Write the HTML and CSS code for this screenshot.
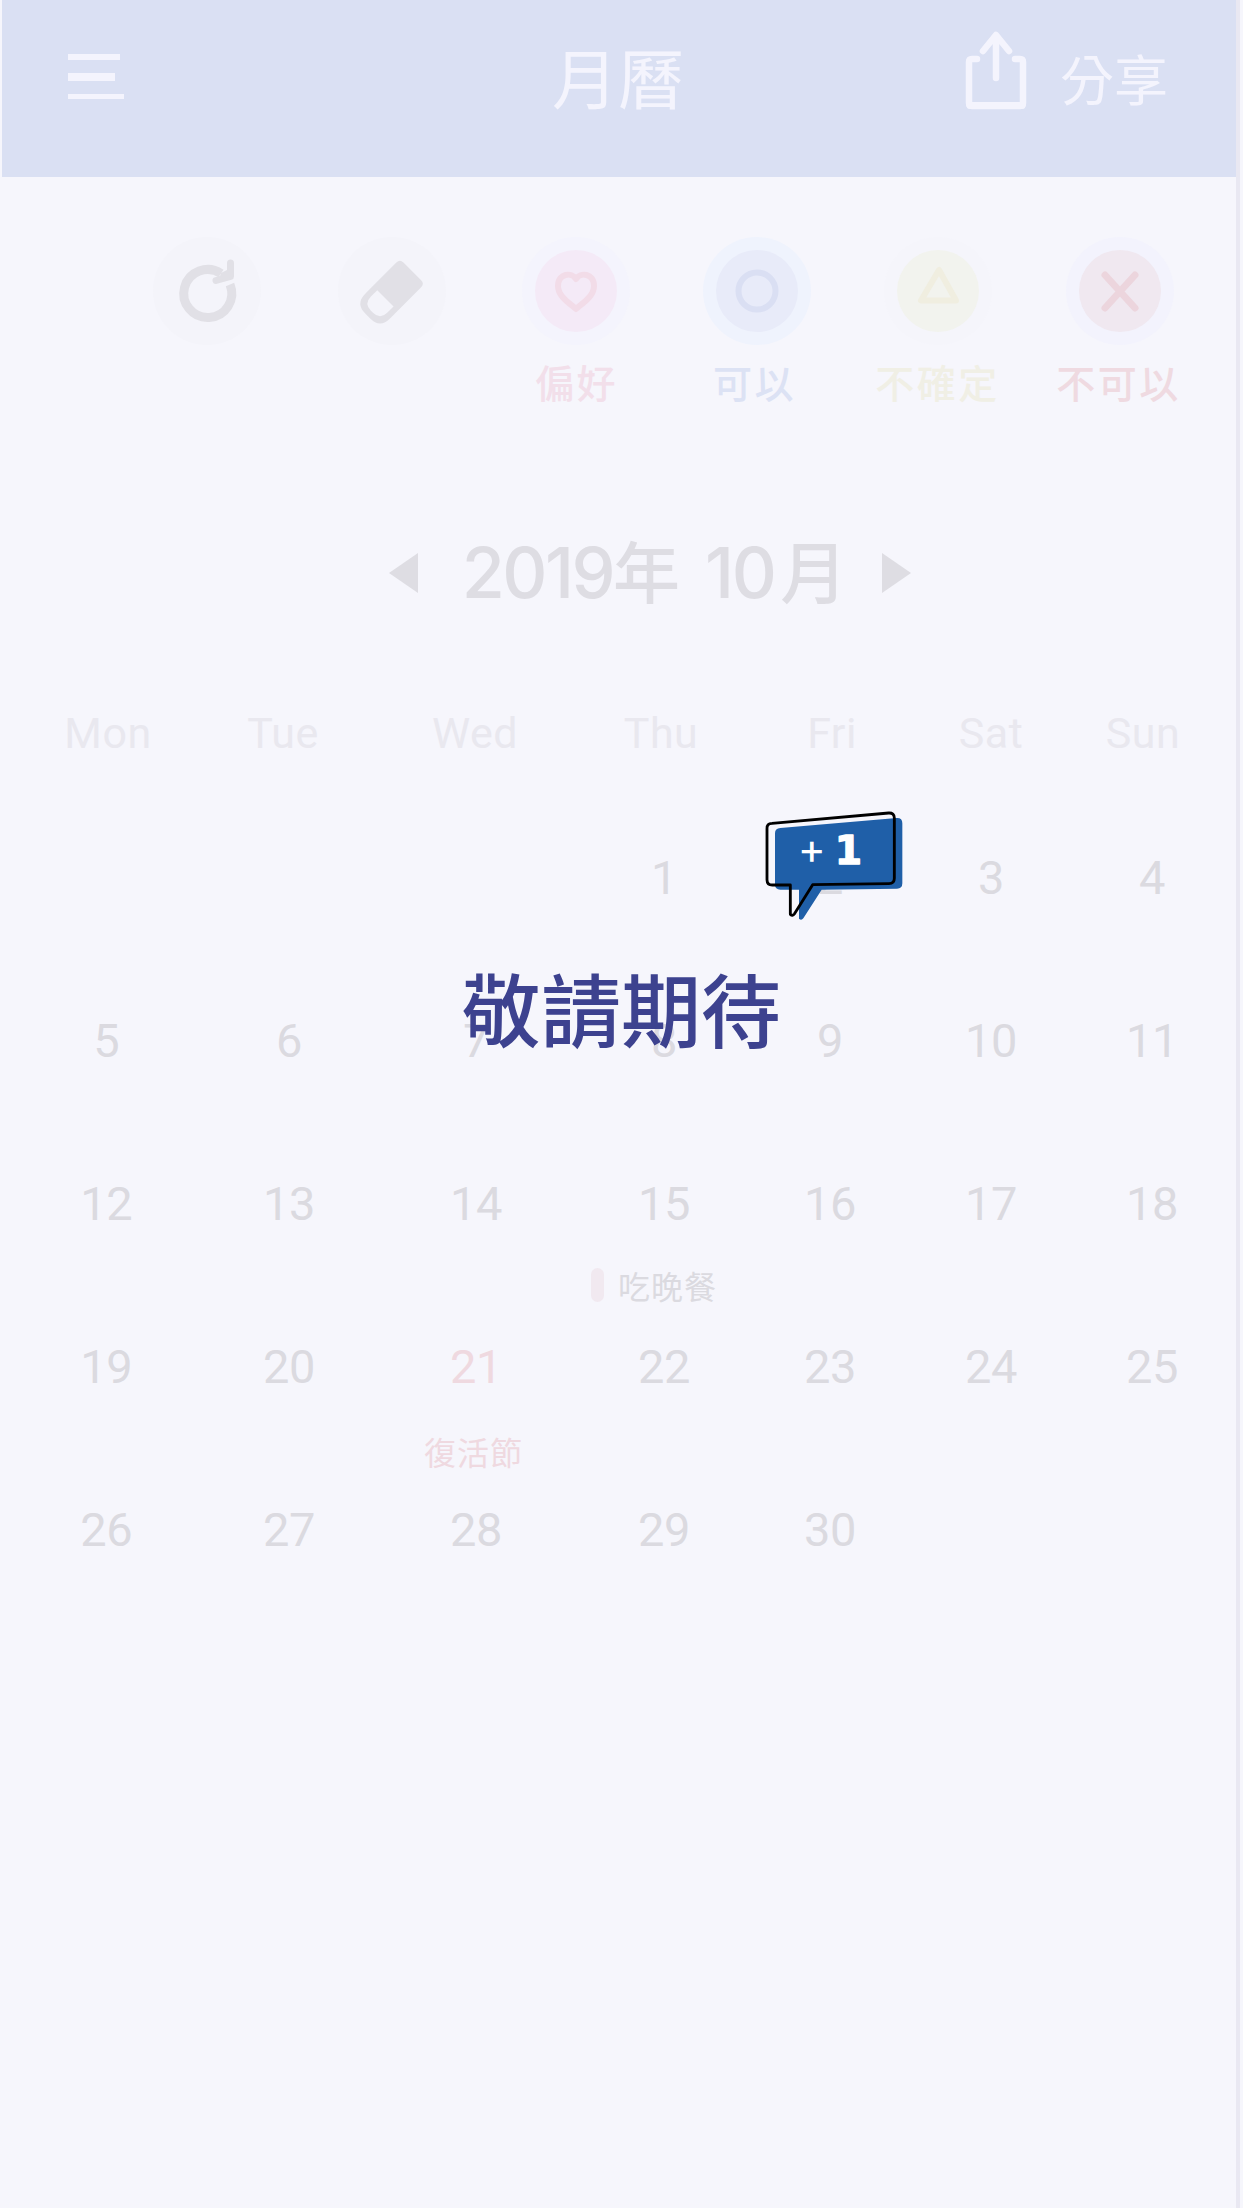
FILE: index.html
```html
<!DOCTYPE html>
<html lang="zh-Hant">
<head>
<meta charset="utf-8">
<title>月曆</title>
<link rel="stylesheet" href="styles.css">
</head>
<body>
<div class="app">
  <header class="topbar">
    <div class="menu"><i class="bar bar-a"></i><i class="bar bar-b"></i><i class="bar bar-c"></i></div>
    <h1 class="title">月曆</h1>
    <div class="share">
      <svg class="share-icon" width="66" height="84" viewBox="0 0 66 84" fill="none" stroke="currentColor" stroke-linecap="round" stroke-linejoin="round">
        <path d="M14 32H9Q6 32 6 35V76Q6 79 9 79H57Q60 79 60 76V35Q60 32 57 32H52" stroke-width="6.500"/>
        <path d="M7 78.500H59" stroke-width="7"/>
        <path d="M33 51V9M20 24L33 8L46 24" stroke-width="6.500"/>
      </svg>
      <span class="share-text">分享</span>
    </div>
  </header>

  <nav class="tools">
    <div class="tool"><svg class="disc gray" width="110" height="110" viewBox="-55 -55 110 110">
      <circle class="halo" r="54"/>
      <path d="M23 -6.500A24 24 0 1 1 14 -17.500" class="ring" stroke-width="9"/>
      <path d="M23.500 -28V-14.500L9 -10.500" class="line" stroke-width="7"/>
      <path d="M14 -18L22 -22L25 -14L12 -11Z" class="solid"/>
    </svg></div>
    <div class="tool"><svg class="disc gray" width="110" height="110" viewBox="-55 -55 110 110">
      <circle class="halo" r="54"/>
      <g transform="translate(-2 2) rotate(-45)">
        <path class="solid" d="M-9 -17H26Q31 -17 31 -12V13Q31 18 26 18H-18Q-32 18 -32 4V-3Q-32 -17 -18 -17ZM-7 -11H-16Q-26 -11 -26 -1V2Q-26 12 -16 12H-7Z" fill-rule="evenodd"/>
      </g>
    </svg></div>
    <div class="tool"><svg class="disc pink" width="110" height="110" viewBox="-55 -55 110 110">
      <circle class="halo" r="54"/><circle class="core" r="41"/>
      <path class="line" stroke-width="6" d="M0 18C-5 13 -18 6 -18 -5C-18 -18 -4 -19 0 -12C4 -19 18 -18 18 -5C18 6 5 13 0 18Z"/>
    </svg><span class="label pink-text">偏好</span></div>
    <div class="tool"><svg class="disc blue" width="110" height="110" viewBox="-55 -55 110 110">
      <circle class="halo" r="54"/><circle class="core" r="41"/>
      <circle class="line" stroke-width="6" r="18.500"/>
    </svg><span class="label blue-text">可以</span></div>
    <div class="tool"><svg class="disc yellow" width="110" height="110" viewBox="-55 -55 110 110">
      <circle class="halo" r="54"/><circle class="core" r="41"/>
      <path class="line" stroke-width="6" d="M1 -21L-17 9.500H18Z"/>
    </svg><span class="label yellow-text">不確定</span></div>
    <div class="tool"><svg class="disc red" width="110" height="110" viewBox="-55 -55 110 110">
      <circle class="halo" r="54"/><circle class="core" r="41"/>
      <path class="line" stroke-width="7" d="M-15 -16L15 17M15 -16L-15 17"/>
    </svg><span class="label red-text">不可以</span></div>
  </nav>

  <div class="month">
    <svg width="29" height="40" viewBox="0 0 29 40"><path d="M0 20L29 0V40Z" fill="currentColor"/></svg>
    <div class="month-text"><span class="num year">2019</span><span class="han">年</span><span class="num mon">10</span><span class="han moon">月</span></div>
    <svg width="29" height="40" viewBox="0 0 29 40"><path d="M29 20L0 0V40Z" fill="currentColor"/></svg>
  </div>

  <div class="weekdays"><span>Mon</span><span>Tue</span><span>Wed</span><span>Thu</span><span>Fri</span><span>Sat</span><span>Sun</span></div>

  <main class="days">
    <div class="day"></div><div class="day"></div><div class="day"></div><div class="day">1</div><div class="day">2</div><div class="day">3</div><div class="day">4</div>
    <div class="day">5</div><div class="day">6</div><div class="day">7</div><div class="day">8</div><div class="day">9</div><div class="day">10</div><div class="day">11</div>
    <div class="day">12</div><div class="day">13</div><div class="day">14</div><div class="day">15<span class="event dinner"><i class="pill"></i>吃晚餐</span></div><div class="day">16</div><div class="day">17</div><div class="day">18</div>
    <div class="day">19</div><div class="day">20</div><div class="day holiday">21<span class="event festival">復活節</span></div><div class="day">22</div><div class="day">23</div><div class="day">24</div><div class="day">25</div>
    <div class="day">26</div><div class="day">27</div><div class="day">28</div><div class="day">29</div><div class="day">30</div>
  </main>

  <div class="edge"></div>
  <div class="coming">敬請期待</div>
  <svg class="bubble" width="190" height="150" viewBox="0 0 570 450">
    <path fill="#1f5fa8" d="M121 114L470 84Q487 83 487 100V280Q487 296 471 296L245 299L190 385Q184 393 177 386V299H121Q105 299 105 283V130Q105 115 121 114Z"/>
    <path fill="none" stroke="#000" stroke-width="8.500" stroke-linejoin="round" d="M96 100L446 69Q463 68 463 84V265Q463 281 447 281L218 284L163 372Q158 379 151 373V285H97Q81 285 81 269V116Q80 101 96 100Z"/>
    <text class="plus" x="215" y="223">+</text>
    <text class="one" x="325" y="223">1</text>
  </svg>
</div>
</body>
</html>
```
FILE: styles.css
```css
* { box-sizing: border-box; }
body { margin: 0; background: #f6f6fc; }
.app {
  position: relative;
  width: 1243px;
  height: 2208px;
  overflow: hidden;
  font-family: Roboto, "Noto Sans CJK TC", sans-serif;
}
.topbar {
  display: flex;
  justify-content: space-between;
  width: 1235px;
  height: 177px;
  margin-left: 2px;
  padding: 0 69px 0 66px;
  background: #dae0f3;
  color: #f4f4fd;
}
.menu { display: flex; flex-direction: column; width: 205px; padding-top: 54px; }
.bar { background: #f4f4fd; }
.bar-a { width: 52px; height: 6px; margin-bottom: 13px; }
.bar-b { width: 47px; height: 8px; margin-bottom: 13px; }
.bar-c { width: 56px; height: 5px; }
.title {
  margin: 31px 0 0;
  font: 400 66px/88px "Noto Sans CJK TC", sans-serif;
}
.share { display: flex; gap: 31px; padding-top: 27px; }
.share-text { margin-top: 13px; font: 400 54px/76px "Noto Sans CJK TC", sans-serif; }

.tools {
  display: grid;
  grid-template-columns: 184px 185px 183px 179px 183px 181px;
  margin: 59px 0 0 115px;
  height: 180px;
}
.tool { display: flex; flex-direction: column; align-items: center; }
.line, .ring { fill: none; stroke: currentColor; stroke-linejoin: round; }
.line { stroke-linecap: round; }
.solid { fill: currentColor; }
.gray { color: #e1e0e6; }
.gray .halo { fill: #f4f4fa; }
.pink { color: #f2dce8; }
.pink .halo { fill: #f4f4fd; }
.pink .core { fill: #f4eaf7; }
.blue { color: #dadff3; }
.blue .halo { fill: #eff3fd; }
.blue .core { fill: #e8ebf9; }
.yellow { color: #f0eee0; }
.yellow .halo { fill: #f5f5fb; }
.yellow .core { fill: #f2f3ee; }
.red { color: #ecd5dd; }
.red .halo { fill: #f3f3fd; }
.red .core { fill: #f0e8f0; }
.label {
  font: 500 39px/56px "Noto Sans CJK TC", sans-serif;
  letter-spacing: 2.500px;
  white-space: nowrap;
  margin-top: 7px;
}
.pink-text { color: #f2dfea; margin-left: 2px; }
.blue-text { color: #dce2f4; margin-right: 4px; }
.yellow-text { color: #f0efe5; }
.red-text { color: #efdae1; margin-right: 2px; }

.month {
  display: flex;
  align-items: center;
  justify-content: space-between;
  width: 522px;
  height: 90px;
  margin: 112px 0 0 389px;
  color: #dedde3;
}
.month-text { display: flex; align-items: baseline; margin: -5px 0 0 9px; }
.num { font: 500 70px/90px Inter, sans-serif; letter-spacing: -2.500px; }
.han { font: 500 67px/90px "Noto Sans CJK TC", sans-serif; }
.mon { margin-left: 25px; }
.moon { margin-left: 6px; }

.weekdays {
  display: grid;
  grid-template-columns: 176px 174px 210px 162px 180px 138px 166px;
  margin: 85px 0 0 20px;
  font-size: 43px;
  line-height: 60px;
  letter-spacing: 0.500px;
  text-align: center;
  color: #e9e8ef;
}
.days {
  display: grid;
  grid-template-columns: 182.500px 183px 191px 185px 147px 175px 147px;
  grid-auto-rows: 163px;
  margin: 85px 0 0 15px;
  font-size: 47px;
  line-height: 60px;
  letter-spacing: -0.300px;
  color: #dbdae0;
}
.day { display: flex; flex-direction: column; align-items: center; }
.holiday { color: #efd9e0; }
.event {
  display: flex;
  align-items: center;
  gap: 14px;
  margin-top: 28px;
  font: 400 32px/46px "Noto Sans CJK TC", sans-serif;
  letter-spacing: 1px;
  white-space: nowrap;
}
.dinner { margin-right: 20px; }
.festival { margin: 31px 5px 0 0; }
.pill { width: 13px; height: 34px; border-radius: 7px; background: #f1e9f0; }

.edge { position: absolute; top: 0; left: 1236px; width: 4px; height: 2208px; background: #e9e8f2; }
.coming {
  position: absolute;
  left: 461px;
  top: 948px;
  font: 500 80px/116px "Noto Sans CJK TC", sans-serif;
  color: #3d428f;
  white-space: nowrap;
}
.bubble { position: absolute; left: 740px; top: 790px; }
.plus, .one { fill: #fff; stroke: #fff; stroke-linejoin: round; text-anchor: middle; }
.plus { font: 400 127px Inter, sans-serif; stroke-width: 0; }
.one { font: 700 118px "DejaVu Sans", sans-serif; stroke-width: 4; }
```
